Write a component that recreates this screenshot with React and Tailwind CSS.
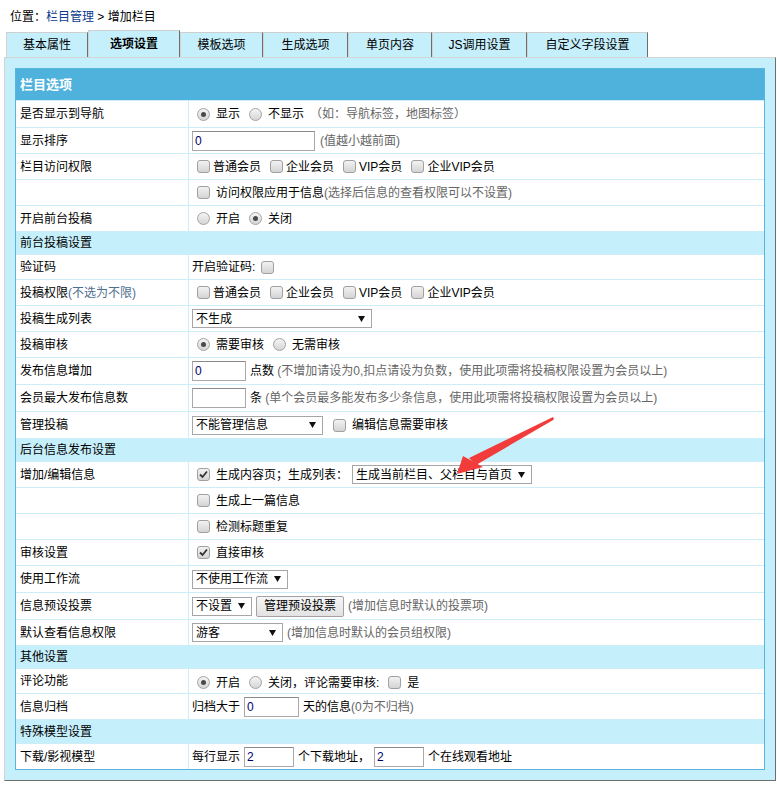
import React from 'react';

const tabs = [
  { name: '基本属性', w: 'w-[82px]' },
  { name: '选项设置', w: 'w-[92px]', active: true },
  { name: '模板选项', w: 'w-[83px]' },
  { name: '生成选项', w: 'w-[85px]' },
  { name: '单页内容', w: 'w-[84px]' },
  { name: 'JS调用设置', w: 'w-[95px]' },
  { name: '自定义字段设置', w: 'w-[121px]' },
];

// radio drawn by hand so it looks like the old XP style
const Radio = ({ on }) => (
  <span className="inline-flex items-center justify-center w-[13px] h-[13px] rounded-full border border-[#a3a3a3] bg-gradient-to-b from-[#f4f4f4] to-[#d6d6d6] shrink-0">
    {on && <span className="w-[5px] h-[5px] rounded-full bg-[#4a4a4a]" />}
  </span>
);

const Check = ({ on }) => (
  <span className="inline-flex items-center justify-center w-[13px] h-[13px] rounded-[3px] border border-[#a0a0a0] bg-gradient-to-b from-[#f2f2f2] to-[#d4d4d4] shrink-0">
    {on && (
      <svg width="9" height="9" viewBox="0 0 9 9">
        <path d="M1 4.5 L3.5 7 L8 1.5" fill="none" stroke="#333" strokeWidth="1.8" />
      </svg>
    )}
  </span>
);

const Select = ({ text, w }) => (
  <span className={`inline-flex items-center justify-between h-[19px] border border-[#a6a6a6] bg-white pl-[3px] pr-[6px] ${w}`}>
    <span className="leading-[14px]">{text}</span>
    <svg width="7" height="6" viewBox="0 0 7 6">
      <path d="M0 0 L7 0 L3.5 6 Z" fill="#111" />
    </svg>
  </span>
);

const Input = ({ value, w }) => (
  <input
    readOnly
    value={value}
    className={`h-[20px] border border-[#a9a9a9] border-t-[#8a8a8a] bg-white px-[2px] text-[12px] text-[#00006e] outline-none ${w}`}
  />
);

const Hint = ({ children }) => <span className="text-[#666]">{children}</span>;

const Row = ({ label, h, children }) => (
  <div className={`flex border-t border-[#cdedf9] ${h}`}>
    <div className="w-[173px] shrink-0 border-r border-[#cdedf9] pl-[4px] flex items-center bg-white">{label}</div>
    <div className="flex-1 flex items-center pl-[3px] bg-white whitespace-nowrap">{children}</div>
  </div>
);

const Section = ({ title, h }) => (
  <div className={`flex items-center border-t border-[#cdedf9] bg-[#c6effc] pl-[4px] ${h}`}>{title}</div>
);

const Opt = ({ children }) => <span className="inline-flex items-center gap-[6px]">{children}</span>;

const Members = () => (
  <span className="inline-flex items-center gap-[9px] pl-[5px]">
    <span className="inline-flex items-center gap-[3px]"><Check />普通会员</span>
    <span className="inline-flex items-center gap-[3px]"><Check />企业会员</span>
    <span className="inline-flex items-center gap-[3px]"><Check />VIP会员</span>
    <span className="inline-flex items-center gap-[3px]"><Check />企业VIP会员</span>
  </span>
);

export default function App() {
  return (
    <div className="relative w-[777px] h-[785px] bg-white text-[12px] leading-[14px] text-black font-['Liberation_Sans','Noto_Sans_CJK_SC',sans-serif]">
      <div className="h-[30px] pl-[10px] pt-[10px]">
        位置：<span className="text-[#0b3a8c]">栏目管理</span> &gt; 增加栏目
      </div>

      <div className="flex items-end h-[27px] pl-[6px]">
        {tabs.map((t) => (
          <div
            key={t.name}
            className={`${t.w} flex items-center justify-center bg-[#c6effc] border-l border-t border-r border-l-[#d2d2d2] border-t-[#cfcfcf] border-r-[#6e6e6e] ${
              t.active ? 'h-[27px] font-bold' : 'h-[25px]'
            }`}
          >
            {t.name}
          </div>
        ))}
      </div>

      <div className="ml-[4px] w-[772px] bg-[#c6effc] border border-l-[#d4d4d4] border-t-[#d4d4d4] border-r-[#6e6e6e] border-b-[#6e6e6e] p-[10px]">
        <div className="border border-[#56b6e0]">
          <div className="h-[31px] bg-[#4fb2dc] text-white font-bold text-[13px] flex items-center pl-[4px]">栏目选项</div>

          <Row label="是否显示到导航" h="h-[27px]">
            <span className="inline-flex items-center gap-[9px] pl-[5px]">
              <Opt><Radio on />显示</Opt>
              <Opt><Radio />不显示<Hint>（如：导航标签，地图标签）</Hint></Opt>
            </span>
          </Row>
          <Row label="显示排序" h="h-[26px]">
            <Input value="0" w="w-[123px]" />
            <span className="ml-[5px]"><Hint>(值越小越前面)</Hint></span>
          </Row>
          <Row label="栏目访问权限" h="h-[26px]">
            <Members />
          </Row>
          <Row label="" h="h-[26px]">
            <span className="inline-flex items-center gap-[6px] pl-[5px]">
              <Check />
              <span>访问权限应用于信息<Hint>(选择后信息的查看权限可以不设置)</Hint></span>
            </span>
          </Row>
          <Row label="开启前台投稿" h="h-[26px]">
            <span className="inline-flex items-center gap-[9px] pl-[5px]">
              <Opt><Radio />开启</Opt>
              <Opt><Radio on />关闭</Opt>
            </span>
          </Row>

          <Section title="前台投稿设置" h="h-[23px]" />
          <Row label="验证码" h="h-[25px]">
            开启验证码:<span className="ml-[6px] inline-flex"><Check /></span>
          </Row>
          <Row
            label={<span>投稿权限<span className="text-[#4f6f8f]">(不选为不限)</span></span>}
            h="h-[26px]"
          >
            <Members />
          </Row>
          <Row label="投稿生成列表" h="h-[26px]">
            <Select text="不生成" w="w-[180px]" />
          </Row>
          <Row label="投稿审核" h="h-[26px]">
            <span className="inline-flex items-center gap-[9px] pl-[5px]">
              <Opt><Radio on />需要审核</Opt>
              <Opt><Radio />无需审核</Opt>
            </span>
          </Row>
          <Row label="发布信息增加" h="h-[27px]">
            <Input value="0" w="w-[54px]" />
            <span className="ml-[4px]">点数 <Hint>(不增加请设为0,扣点请设为负数，使用此项需将投稿权限设置为会员以上)</Hint></span>
          </Row>
          <Row label="会员最大发布信息数" h="h-[27px]">
            <Input value="" w="w-[54px]" />
            <span className="ml-[4px]">条 <Hint>(单个会员最多能发布多少条信息，使用此项需将投稿权限设置为会员以上)</Hint></span>
          </Row>
          <Row label="管理投稿" h="h-[27px]">
            <Select text="不能管理信息" w="w-[131px]" />
            <span className="inline-flex items-center gap-[6px] ml-[10px]"><Check />编辑信息需要审核</span>
          </Row>

          <Section title="后台信息发布设置" h="h-[23px]" />
          <Row label="增加/编辑信息" h="h-[26px]">
            <span className="inline-flex items-center gap-[6px] pl-[5px]"><Check on />生成内容页；生成列表：</span>
            <span className="ml-[4px]"><Select text="生成当前栏目、父栏目与首页" w="w-[180px]" /></span>
          </Row>
          <Row label="" h="h-[26px]">
            <span className="inline-flex items-center gap-[6px] pl-[5px]"><Check />生成上一篇信息</span>
          </Row>
          <Row label="" h="h-[26px]">
            <span className="inline-flex items-center gap-[6px] pl-[5px]"><Check />检测标题重复</span>
          </Row>
          <Row label="审核设置" h="h-[26px]">
            <span className="inline-flex items-center gap-[6px] pl-[5px]"><Check on />直接审核</span>
          </Row>
          <Row label="使用工作流" h="h-[27px]">
            <Select text="不使用工作流" w="w-[96px]" />
          </Row>
          <Row label="信息预设投票" h="h-[27px]">
            <Select text="不设置" w="w-[60px]" />
            <span className="ml-[4px] inline-flex items-center h-[21px] px-[7px] border border-[#a3a3a3] bg-gradient-to-b from-[#f6f6f6] to-[#e2e2e2] rounded-[2px]">管理预设投票</span>
            <span className="ml-[4px]"><Hint>(增加信息时默认的投票项)</Hint></span>
          </Row>
          <Row label="默认查看信息权限" h="h-[26px]">
            <Select text="游客" w="w-[91px]" />
            <span className="ml-[4px]"><Hint>(增加信息时默认的会员组权限)</Hint></span>
          </Row>

          <Section title="其他设置" h="h-[23px]" />
          <Row label="评论功能" h="h-[25px]">
            <span className="inline-flex items-center gap-[9px] pl-[5px] pt-[3px]">
              <Opt><Radio on />开启</Opt>
              <Opt><Radio />关闭，评论需要审核:</Opt>
              <Opt><Check />是</Opt>
            </span>
          </Row>
          <Row label="信息归档" h="h-[26px]">
            归档大于<span className="ml-[4px]"><Input value="0" w="w-[55px]" /></span>
            <span className="ml-[4px]">天的信息<Hint>(0为不归档)</Hint></span>
          </Row>

          <Section title="特殊模型设置" h="h-[24px]" />
          <Row label="下载/影视模型" h="h-[26px]">
            每行显示<span className="ml-[4px]"><Input value="2" w="w-[50px]" /></span>
            <span className="ml-[4px]">个下载地址，</span>
            <span className="ml-[4px]"><Input value="2" w="w-[50px]" /></span>
            <span className="ml-[4px]">个在线观看地址</span>
          </Row>
        </div>
      </div>

      {/* red annotation arrow drawn over the page */}
      <svg className="absolute left-0 top-0 pointer-events-none" width="777" height="785">
        <polygon points="553,417 554,419.5 476,465 469,458" fill="#f23c3c" />
        <polygon points="457,474 463,456 483,467" fill="#f23c3c" />
      </svg>
    </div>
  );
}
